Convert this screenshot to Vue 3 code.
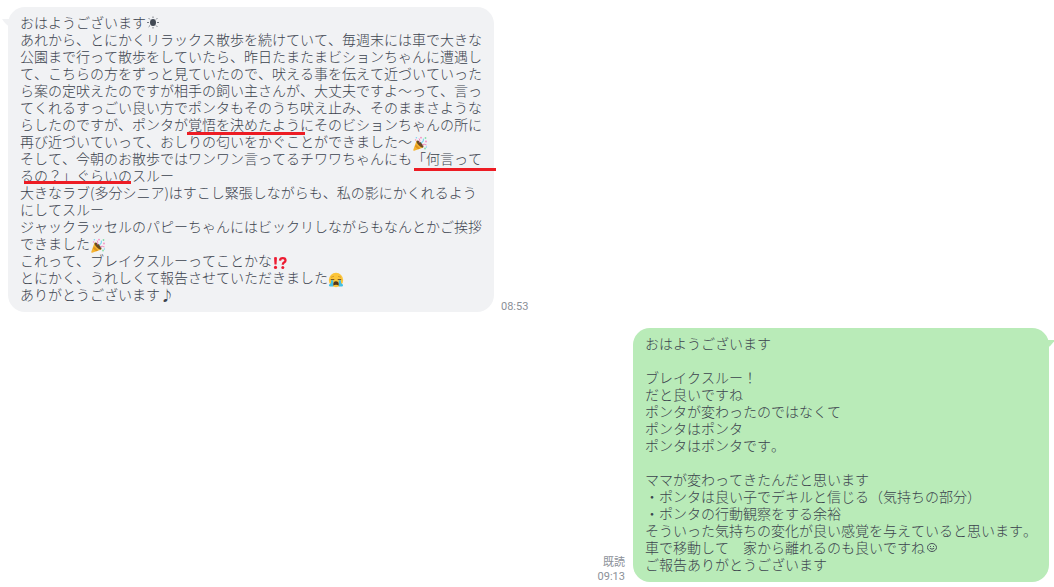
<script setup>
const received = [
  [{ t: 'おはようございます' }, { icon: 'sun' }],
  [{ t: 'あれから、とにかくリラックス散歩を続けていて、毎週末には車で大きな' }],
  [{ t: '公園まで行って散歩をしていたら、昨日たまたまビションちゃんに遭遇し' }],
  [{ t: 'て、こちらの方をずっと見ていたので、吠える事を伝えて近づいていった' }],
  [{ t: 'ら案の定吠えたのですが相手の飼い主さんが、大丈夫ですよ～って、言っ' }],
  [{ t: 'てくれるすっごい良い方でポンタもそのうち吠え止み、そのままさような' }],
  [{ t: 'らしたのですが、ポンタが' }, { t: '覚悟を決めたよう', mark: 'mark-first' }, { t: 'にそのビションちゃんの所に' }],
  [{ t: '再び近づいていって、おしりの匂いをかぐことができました～' }, { icon: 'party' }],
  [{ t: 'そして、今朝のお散歩ではワンワン言ってるチワワちゃんにも' }, { t: '「何言って', mark: 'mark-second' }],
  [{ t: 'るの？」ぐらいの', mark: 'mark-third' }, { t: 'スルー' }],
  [{ t: '大きなラブ(多分シニア)はすこし緊張しながらも、私の影にかくれるよう' }],
  [{ t: 'にしてスルー' }],
  [{ t: 'ジャックラッセルのパピーちゃんにはビックリしながらもなんとかご挨拶' }],
  [{ t: 'できました' }, { icon: 'party' }],
  [{ t: 'これって、ブレイクスルーってことかな' }, { icon: 'interrobang' }],
  [{ t: 'とにかく、うれしくて報告させていただきました' }, { icon: 'cry' }],
  [{ t: 'ありがとうございます♪' }],
]

const sent = [
  [{ t: 'おはようございます' }],
  [],
  [{ t: 'ブレイクスルー！' }],
  [{ t: 'だと良いですね' }],
  [{ t: 'ポンタが変わったのではなくて' }],
  [{ t: 'ポンタはポンタ' }],
  [{ t: 'ポンタはポンタです。' }],
  [],
  [{ t: 'ママが変わってきたんだと思います' }],
  [{ t: '・ポンタは良い子でデキルと信じる（気持ちの部分）' }],
  [{ t: '・ポンタの行動観察をする余裕' }],
  [{ t: 'そういった気持ちの変化が良い感覚を与えていると思います。' }],
  [{ t: '車で移動して　家から離れるのも良いですね' }, { icon: 'smile' }],
  [{ t: 'ご報告ありがとうございます' }],
]

const messages = [
  { side: 'received', lines: received, time: '08:53' },
  { side: 'sent', lines: sent, time: '09:13', read: '既読' },
]
</script>

<template>
  <main class="chat">
    <article v-for="m in messages" :key="m.time" class="message" :class="m.side">
      <div class="bubble">
        <svg class="tail" viewBox="0 0 8 8" aria-hidden="true"><path d="M0 0H8V8Q4 6 0 0Z" /></svg>
        <p v-for="(line, i) in m.lines" :key="i" class="line">
          <template v-for="(part, j) in line" :key="j">
            <span v-if="part.t" :class="part.mark && ['mark', part.mark]">{{ part.t }}</span>
            <svg v-else-if="part.icon === 'sun'" class="glyph" viewBox="0 0 14 14" aria-hidden="true">
              <ellipse cx="7" cy="7" rx="3" ry="3.6" fill="#424954" />
              <path d="M7 1V2.5M7 11.5V13M1 7H3M11 7H13M2.6 2.6L4 4M10 10L11.4 11.4M2.6 11.4L4 10M10 4L11.4 2.6" stroke="#747a83" />
            </svg>
            <svg v-else-if="part.icon === 'party'" class="emoji" viewBox="0 0 16 16" aria-hidden="true">
              <path d="M4.6 4.6L11.4 11.4L2.2 14.8Q1 15 1.3 13.8Z" fill="#f5b32f" />
              <path d="M3.8 8.4L8.2 12.5L6.1 13.3L3 10.4Z" fill="#e0941c" />
              <ellipse cx="8" cy="8" rx="4.5" ry="1.7" transform="rotate(45 8 8)" fill="#6b4a22" />
              <path d="M7.4 6.4Q8.5 4 7 2.4" fill="none" stroke="#f08cc8" />
              <path d="M9 7Q12 5.5 11.3 2.6" fill="none" stroke="#7ad5ee" stroke-width="1.1" />
              <path d="M10 9Q12 7.4 14.6 9" fill="none" stroke="#f08fc2" />
              <g fill="#f48fc4"><circle cx="9" cy="1.7" r=".9" /><circle cx="14" cy="5.5" r=".9" /><circle cx="3.6" cy="4" r=".8" /></g>
              <g fill="#84dfa9"><circle cx="13.5" cy="2" r=".9" /><circle cx="13" cy="12.5" r=".9" /></g>
              <g fill="#7fd2f5"><circle cx="4.4" cy="1.8" r=".8" /><circle cx="14.4" cy="11" r=".7" /></g>
            </svg>
            <svg v-else-if="part.icon === 'interrobang'" class="emoji" viewBox="0 0 16 16" aria-hidden="true">
              <path d="M2 2.5Q3.5 1.7 5 2.5L4.5 9.6H2.5Z" fill="#ed1c32" />
              <circle cx="3.5" cy="12.4" r="1.6" fill="#ed1c32" />
              <path d="M8 5.6Q8.2 3.2 10.8 3.2Q13.5 3.2 13.5 5.4Q13.5 6.7 12 7.5Q10.8 8.2 10.8 9.8" fill="none" stroke="#ed1c32" stroke-width="2.3" />
              <circle cx="10.8" cy="12.4" r="1.5" fill="#ed1c32" />
            </svg>
            <svg v-else-if="part.icon === 'cry'" class="emoji" viewBox="0 0 16 16" aria-hidden="true">
              <circle cx="8" cy="8" r="7.2" fill="#fcc53a" />
              <path d="M3 5.3L6 4.3M10 4.3L13 5.3" stroke="#cf9426" stroke-width=".8" />
              <path d="M2.8 7.5H6.3M9.7 7.5H13.2" stroke="#7a5a24" stroke-width="1.1" />
              <path d="M3 8.3H5.3V14.6H1.8Q.4 13.8 1.2 12.4L3 11ZM10.7 8.3H13V11L14.8 12.4Q15.6 13.8 14.2 14.6H10.7Z" fill="#45bfe2" />
              <path d="M5.3 13.4Q5 9.2 8 9.2T10.7 13.4Q8 12 5.3 13.4Z" fill="#52371b" />
            </svg>
            <svg v-else class="glyph" viewBox="0 0 14 14" fill="none" stroke="#48515b" aria-hidden="true">
              <ellipse cx="7" cy="7" rx="4.5" ry="4" />
              <path d="M5.5 5.5V6.5M8.5 5.5V6.5M4.8 7.8Q7 9.6 9.2 7.8" />
            </svg>
          </template>
        </p>
      </div>
      <footer class="meta">
        <span v-if="m.read">{{ m.read }}</span>
        <time>{{ m.time }}</time>
      </footer>
    </article>
  </main>
</template>

<style>
body {
  margin: 0;
  background: #fff;
}
</style>

<style scoped>
.chat {
  display: flex;
  flex-direction: column;
  gap: 16px;
  padding: 7px 5px 5px 8px;
  overflow: hidden;
  font-family: "Noto Sans CJK JP", sans-serif;
  font-kerning: none;
}
.message {
  display: flex;
  align-items: flex-end;
  gap: 7px;
}
.sent {
  flex-direction: row-reverse;
  gap: 8px;
}
.bubble {
  position: relative;
  padding: 7px 12px 9px;
  border-radius: 17px;
  background: #f1f2f4;
  color: #3c434e;
  font-size: 14px;
  font-weight: 300;
}
.sent .bubble {
  background: #b9ebb8;
}
.tail {
  position: absolute;
  top: 12px;
  left: -6px;
  width: 8px;
  height: 8px;
  fill: #f1f2f4;
}
.sent .tail {
  right: -6px;
  left: auto;
  transform: scaleX(-1);
  fill: #b9ebb8;
}
.line {
  display: flex;
  align-items: flex-start;
  height: 17px;
  margin: 0;
  line-height: 17px;
  white-space: pre;
}
.glyph {
  width: 14px;
  height: 17px;
}
.emoji {
  width: 16px;
  height: 16px;
  margin-top: 3px;
}
.mark {
  position: relative;
}
.mark::after {
  content: "";
  position: absolute;
  top: 16px;
  right: -5px;
  left: -1px;
  height: 3px;
  background: #ed1c24;
}
.mark-second::after {
  top: 18px;
  right: -14px;
  left: 2px;
}
.mark-third::after {
  top: 14px;
  right: 1px;
  left: 4px;
}
.meta {
  display: flex;
  flex-direction: column;
  align-items: flex-end;
  gap: 3px;
  color: #8b9098;
  font: 11px/11px Roboto, "Noto Sans CJK JP", sans-serif;
}
</style>
